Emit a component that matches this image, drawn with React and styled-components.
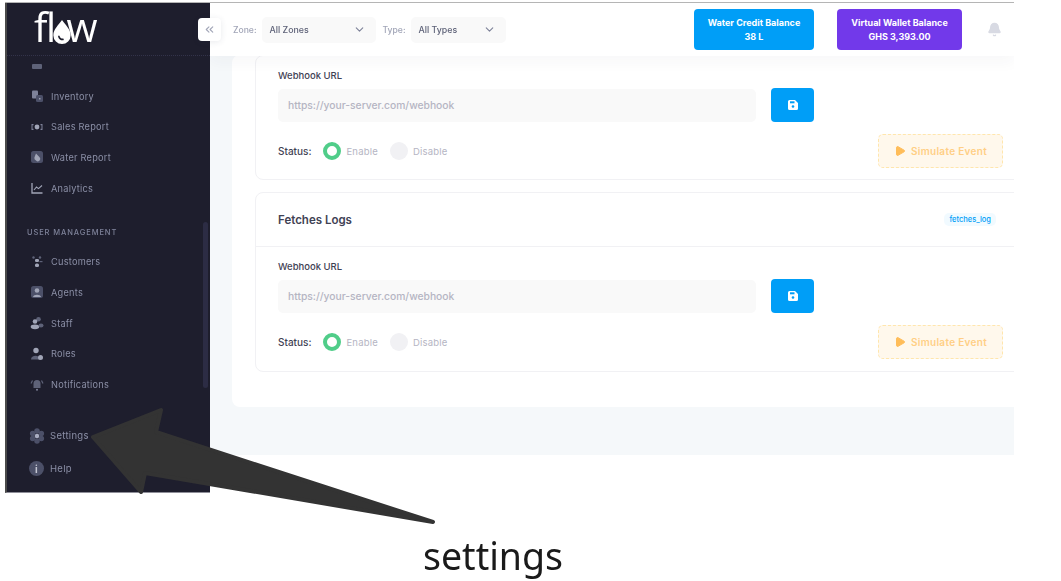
import React from 'react';
import styled, { createGlobalStyle } from 'styled-components';
import { ChevronDown, ChevronsLeft, Play, Bell } from 'lucide-react';

const GlobalStyle = createGlobalStyle`
  html, body { margin: 0; padding: 0; background: #fff; }
  body { font-family: Inter, "Liberation Sans", sans-serif; }
  * { box-sizing: border-box; }
`;

// sidebar icons, duotone look
const icons = {
  orders: <><rect x="2" y="6" width="10" height="5" rx="1" fill="#5e6278" /></>,
  inventory: <><rect x="2" y="1.5" width="6" height="8" rx="1" fill="#7e8299" /><rect x="6" y="6" width="7" height="7" rx="1.5" fill="#4c5068" /><rect x="9" y="9" width="1.5" height="1.5" fill="#9a9db0" /></>,
  sales: <><path d="M1.5 4h2v1.2h-1v3.6h1V10h-2zM12.5 4h-2v1.2h1v3.6h-1V10h2z" fill="#7e8299" /><circle cx="7" cy="7" r="2.4" fill="#a1a5b7" /></>,
  water: <><rect x="1" y="1" width="12" height="12" rx="2.5" fill="#4c5068" /><path d="M6 3.5l3.6 3.8a2.4 2.4 0 0 1-3.6 3.2 2.6 2.6 0 0 1-1.6-3z" fill="#a1a5b7" /></>,
  analytics: <><path d="M2 2v10h10.5" stroke="#a1a5b7" strokeWidth="1.3" fill="none" /><path d="M4 9l2.5-3 2 1.6L12 4.500" stroke="#a1a5b7" strokeWidth="1.1" fill="none" /></>,
  customers: <><circle cx="3.500" cy="2.500" r="1.200" fill="#5e6278" /><circle cx="10" cy="2.500" r="1.200" fill="#5e6278" /><rect x="5" y="4" width="4" height="3" rx="1.200" fill="#a1a5b7" /><rect x="5" y="8.500" width="4" height="3.500" rx="1.500" fill="#a1a5b7" /><rect x="9.500" y="6" width="3" height="1.200" fill="#5e6278" /></>,
  agents: <><rect x="1" y="1" width="12" height="12" rx="2.500" fill="#4c5068" /><circle cx="7" cy="5.500" r="2.300" fill="#a1a5b7" /><path d="M3 12c.5-3 7.500-3 8 0z" fill="#a1a5b7" /></>,
  staff: <><circle cx="8.500" cy="3.300" r="2.300" fill="#5e6278" /><circle cx="5" cy="5.500" r="2.300" fill="#a1a5b7" /><ellipse cx="5" cy="10.800" rx="4.300" ry="2.400" fill="#a1a5b7" /><ellipse cx="11" cy="9.500" rx="2.500" ry="2" fill="#5e6278" /></>,
  roles: <><circle cx="6" cy="3.500" r="2.700" fill="#a1a5b7" /><path d="M1 12.500c0-5 9-5 9 0z" fill="#5e6278" /><circle cx="10.500" cy="10.500" r="2.500" fill="#a1a5b7" /></>,
  notifications: <><path d="M7 2a3.500 3.500 0 0 1 3.500 3.500V10h-7V5.500A3.500 3.500 0 0 1 7 2z" fill="#5e6278" /><rect x="6" y="10.800" width="2" height="2" rx="1" fill="#7e8299" /><path d="M2.500 2.500L1 5.500M11.500 2.500L13 5.500" stroke="#5e6278" strokeWidth="1.200" /></>,
  settings: <><g fill="#4c5068"><circle cx="7" cy="2.600" r="2.400" /><circle cx="7" cy="11.400" r="2.400" /><circle cx="3.200" cy="4.800" r="2.400" /><circle cx="10.800" cy="4.800" r="2.400" /><circle cx="3.200" cy="9.200" r="2.400" /><circle cx="10.800" cy="9.200" r="2.400" /></g><circle cx="7" cy="7" r="2" fill="#a9adc2" /></>,
};

const topMenu = [
  { key: 'orders', label: '' },
  { key: 'inventory', label: 'Inventory' },
  { key: 'sales', label: 'Sales Report' },
  { key: 'water', label: 'Water Report' },
  { key: 'analytics', label: 'Analytics' },
];

const userMenu = [
  { key: 'customers', label: 'Customers' },
  { key: 'agents', label: 'Agents' },
  { key: 'staff', label: 'Staff' },
  { key: 'roles', label: 'Roles' },
  { key: 'notifications', label: 'Notifications' },
];

const Page = styled.div`
  position: relative;
  width: 1061px;
  height: 581px;
  overflow: hidden;
  background: #fff;
`;

const Frame = styled.div`
  display: flex;
  width: 1009px;
  height: 491px;
  margin: 2px 0 0 5px;
  border-top: 1px solid #b5b5b5;
  filter: blur(0.45px);
`;

const Sidebar = styled.aside`
  position: relative;
  display: flex;
  flex-direction: column;
  flex: 0 0 205px;
  background: #1e1e2d;
  border-left: 2px solid #4a4a4a;
  border-bottom: 1px solid #8f8f99;
`;

const Brand = styled.div`
  display: flex;
  align-items: center;
  height: 53px;
  padding: 0 0 5px 27px;
  border-bottom: 1px dotted #33334a;
  color: #fff;
  font-family: "Open Sans", sans-serif;
  font-size: 40px;
  font-weight: 500;
  letter-spacing: -1.5px;
`;

const Drop = styled.svg`
  width: 20px;
  height: 26px;
  margin: 10px -5px 0 -3px;
`;

const Nav = styled.nav`
  flex: 1;
  overflow: hidden;
`;

const NavList = styled.div`
  margin-top: -6px;
`;

const NavItem = styled.div`
  display: flex;
  align-items: center;
  gap: 7px;
  height: 30.7px;
  padding-left: 23px;
  color: #8b8fa6;
  font-size: 9.2px;
  letter-spacing: 0.25px;
`;

const NavIcon = styled.svg`
  flex: 0 0 14px;
  width: 14px;
  height: 14px;
`;

const SectionTitle = styled.div`
  height: 14px;
  margin: 23px 0 6px 20px;
  color: #7e8299;
  font-size: 7.5px;
  line-height: 14px;
  font-weight: 500;
  letter-spacing: 0.9px;
`;

const SideFooter = styled.div`
  padding-bottom: 7px;
`;

const FootItem = styled.div`
  display: flex;
  align-items: center;
  gap: 5px;
  height: 33px;
  padding-left: 22px;
  color: #8b8fa6;
  font-size: 9.5px;
  letter-spacing: 0.3px;
`;

const FootIcon = styled.svg`
  flex: 0 0 16px;
  width: 16px;
  height: 16px;
`;

const InfoDot = styled.span`
  display: flex;
  align-items: center;
  justify-content: center;
  flex: 0 0 15px;
  height: 15px;
  margin-right: 1px;
  border-radius: 50%;
  background: #4c5068;
  color: #c3c5d2;
  font-size: 10px;
  font-weight: 700;
`;

const ScrollThumb = styled.div`
  position: absolute;
  left: 196px;
  top: 219px;
  width: 5px;
  height: 166px;
  border-radius: 3px;
  background: #2c2c44;
`;

const Main = styled.main`
  position: relative;
  flex: 1;
  min-width: 0;
  display: flex;
  flex-direction: column;
  overflow: hidden;
  background: #fff;
`;

const Topbar = styled.header`
  position: relative;
  z-index: 2;
  flex: 0 0 53px;
  display: flex;
  align-items: center;
  padding: 0 12px 0 23px;
  background: #fff;
  box-shadow: 0 6px 14px rgba(40, 50, 80, 0.04);
`;

const Collapse = styled.div`
  position: absolute;
  left: 198px;
  top: 18px;
  z-index: 3;
  display: flex;
  align-items: center;
  justify-content: center;
  width: 23px;
  height: 23px;
  border-radius: 4px;
  background: #fff;
  color: #a1a5b7;
  box-shadow: 0 1px 6px rgba(40, 50, 80, 0.1);
`;

const FilterLabel = styled.span`
  margin-right: 5px;
  color: #a1a5b7;
  font-size: 8.6px;
  font-weight: 500;
`;

const Select = styled.div`
  display: flex;
  align-items: center;
  justify-content: space-between;
  width: ${p => p.$width}px;
  height: 26px;
  margin-right: 7px;
  padding: 0 10px 0 8px;
  border-radius: 5px;
  background: #f9f9f9;
  color: #5e6278;
  font-size: 8.8px;
  font-weight: 500;
`;

const Balance = styled.div`
  display: flex;
  flex-direction: column;
  align-items: center;
  justify-content: center;
  gap: 3px;
  width: ${p => p.$width}px;
  height: 41px;
  margin-left: ${p => p.$gap};
  border-radius: 4px;
  background: ${p => p.$bg};
  color: #fff;
  font-size: 9px;
  font-weight: 700;
`;

const BellWrap = styled.div`
  display: flex;
  margin-left: 25px;
  color: #d8dae3;
`;

const Content = styled.div`
  flex: 0 0 399px;
  overflow: hidden;
  background: #f5f8fa;
`;

const Card = styled.section`
  display: flex;
  flex-direction: column;
  gap: 12px;
  width: 817px;
  margin: -1px 0 0 22px;
  padding: 0 23px 35px;
  border-radius: 8px;
  background: #fff;
`;

const Panel = styled.div`
  border: 1px solid #f1f1f4;
  border-radius: 8px;
`;

const PanelHead = styled.div`
  display: flex;
  align-items: center;
  justify-content: space-between;
  height: 54px;
  padding: 0 29px 0 22px;
  border-bottom: 1px solid #f1f1f4;
`;

const PanelTitle = styled.h3`
  margin: 0;
  color: #3f4254;
  font-size: 11.5px;
  font-weight: 600;
`;

const Tag = styled.span`
  padding: 2px 5px;
  border-radius: 5px;
  background: #f1faff;
  color: #009ef7;
  font-size: 7.5px;
  font-weight: 500;
`;

const PanelBody = styled.div`
  padding: 12px 22px ${p => p.$bottom}px;
`;

const FieldLabel = styled.div`
  height: 15px;
  margin-bottom: 5px;
  color: #3f4254;
  font-size: 9.5px;
  line-height: 15px;
  font-weight: 500;
`;

const UrlRow = styled.div`
  display: flex;
  align-items: center;
  gap: 15px;
`;

const UrlInput = styled.div`
  display: flex;
  align-items: center;
  width: 478px;
  height: 33px;
  padding-left: 10px;
  border-radius: 5px;
  background: #f9f9f9;
  color: #b5b5c3;
  font-size: 10.3px;
  font-weight: 500;
`;

const SaveButton = styled.div`
  display: flex;
  align-items: center;
  justify-content: center;
  width: 43px;
  height: 34px;
  border-radius: 4px;
  background: #009ef7;
`;

const StatusRow = styled.div`
  display: flex;
  align-items: center;
  height: 34px;
  margin-top: 12px;
`;

const StatusLabel = styled.span`
  margin-right: 12px;
  color: #3f4254;
  font-size: 10px;
  font-weight: 500;
`;

const Radio = styled.span`
  width: 18px;
  height: 18px;
  margin-right: 5px;
  border-radius: 50%;
  background: ${p => (p.$on ? '#fff' : '#f1f1f4')};
  border: ${p => (p.$on ? '4px solid #50cd89' : 'none')};
`;

const RadioText = styled.span`
  margin-right: 12px;
  color: #b5b5c3;
  font-size: 9.5px;
  letter-spacing: 0.2px;
`;

const Simulate = styled.div`
  display: flex;
  align-items: center;
  justify-content: center;
  gap: 5px;
  width: 125px;
  height: 34px;
  margin-left: auto;
  border: 1px dashed #ffe6ad;
  border-radius: 5px;
  background: #fff8ec;
  color: #ffcf85;
  font-size: 10px;
  font-weight: 600;
  letter-spacing: 0.3px;
`;

const Arrow = styled.svg`
  position: absolute;
  left: 0;
  top: 0;
  z-index: 5;
  width: 1061px;
  height: 581px;
  pointer-events: none;
`;

const Caption = styled.div`
  position: absolute;
  left: 423px;
  top: 531px;
  z-index: 5;
  color: #1a1a1a;
  font-family: "Noto Sans", "Open Sans", sans-serif;
  font-size: 37.500px;
  line-height: 50px;
`;

const MenuRow = ({ item }) => (
  <NavItem>
    <NavIcon viewBox="0 0 14 14">{icons[item.key]}</NavIcon>
    {item.label}
  </NavItem>
);

const WebhookBody = ({ bottom }) => (
  <PanelBody $bottom={bottom}>
    <FieldLabel>Webhook URL</FieldLabel>
    <UrlRow>
      <UrlInput>https://your-server.com/webhook</UrlInput>
      <SaveButton>
        <svg width="10" height="10" viewBox="0 0 10 10">
          <path d="M1.500 0h5.500L10 3v5.500A1.500 1.500 0 0 1 8.500 10h-7A1.500 1.500 0 0 1 0 8.500v-7A1.500 1.500 0 0 1 1.500 0z" fill="#fff" />
          <rect x="2" y="1.300" width="4.500" height="2" fill="#009ef7" />
          <circle cx="5" cy="6.500" r="1.300" fill="#009ef7" />
        </svg>
      </SaveButton>
    </UrlRow>
    <StatusRow>
      <StatusLabel>Status:</StatusLabel>
      <Radio $on />
      <RadioText>Enable</RadioText>
      <Radio />
      <RadioText>Disable</RadioText>
      <Simulate>
        <Play size={12} fill="#ffbd59" color="#ffbd59" />
        Simulate Event
      </Simulate>
    </StatusRow>
  </PanelBody>
);

const App = () => {
  return (
    <Page>
      <GlobalStyle />
      <Frame>
        <Sidebar>
          <Brand>
            fl
            <Drop viewBox="0 0 18 24">
              <path d="M9 1c3 4.500 8 8.500 8 14a8 8 0 0 1-16 0C1 9.500 6 5.500 9 1z" fill="#fff" />
              <path d="M6 15.500a3.500 3.500 0 0 0 4.500 3.200" stroke="#1e1e2d" strokeWidth="1.500" fill="none" />
            </Drop>
            w
          </Brand>
          <Nav>
            <NavList>
              {topMenu.map(item => <MenuRow key={item.key} item={item} />)}
              <SectionTitle>USER MANAGEMENT</SectionTitle>
              {userMenu.map(item => <MenuRow key={item.key} item={item} />)}
            </NavList>
          </Nav>
          <SideFooter>
            <FootItem>
              <FootIcon viewBox="0 0 14 14">{icons.settings}</FootIcon>
              Settings
            </FootItem>
            <FootItem>
              <InfoDot>i</InfoDot>
              Help
            </FootItem>
          </SideFooter>
          <ScrollThumb />
        </Sidebar>
        <Main>
          <Topbar>
            <FilterLabel>Zone:</FilterLabel>
            <Select $width={114}>
              All Zones
              <ChevronDown size={13} color="#7e8299" />
            </Select>
            <FilterLabel>Type:</FilterLabel>
            <Select $width={95}>
              All Types
              <ChevronDown size={13} color="#7e8299" />
            </Select>
            <Balance $width={120} $gap="auto" $bg="#009ef7">
              <span>Water Credit Balance</span>
              <span>38 L</span>
            </Balance>
            <Balance $width={125} $gap="23px" $bg="#7239ea">
              <span>Virtual Wallet Balance</span>
              <span>GHS 3,393.00</span>
            </Balance>
            <BellWrap>
              <Bell size={15} fill="#d8dae3" />
            </BellWrap>
          </Topbar>
          <Content>
            <Card>
              <Panel>
                <WebhookBody bottom={11} />
              </Panel>
              <Panel>
                <PanelHead>
                  <PanelTitle>Fetches Logs</PanelTitle>
                  <Tag>fetches_log</Tag>
                </PanelHead>
                <WebhookBody bottom={12} />
              </Panel>
            </Card>
          </Content>
        </Main>
      </Frame>
      <Collapse>
        <ChevronsLeft size={13} />
      </Collapse>
      <Arrow viewBox="0 0 1061 581">
        <polygon
          points="93,437 161,410 156,432 433,522 145,473 141,492"
          fill="#333"
          stroke="#333"
          strokeWidth="4"
          strokeLinejoin="round"
        />
      </Arrow>
      <Caption>settings</Caption>
    </Page>
  );
};

export default App;
